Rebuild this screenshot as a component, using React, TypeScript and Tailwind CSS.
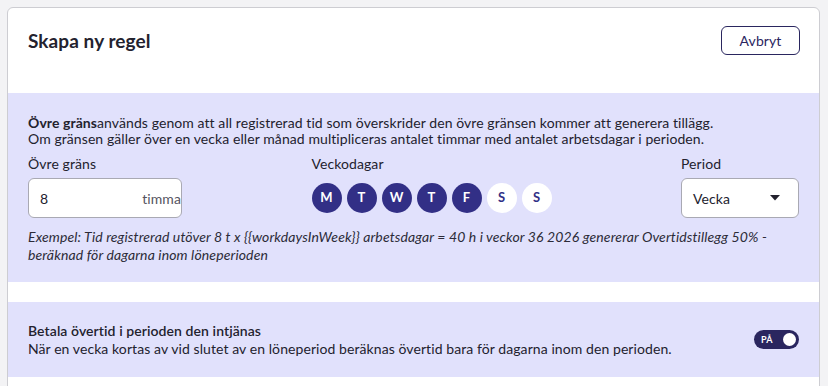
import React, { useState } from "react";

const days = [
  { label: "M", on: true },
  { label: "T", on: true },
  { label: "W", on: true },
  { label: "T", on: true },
  { label: "F", on: true },
  { label: "S", on: false },
  { label: "S", on: false },
];

const DayButton: React.FC<{ label: string; on: boolean }> = ({ label, on }) => (
  <button
    className={`w-[30px] h-[30px] rounded-full flex items-center justify-center text-[13px] font-bold ${
      on ? "bg-[#322f86] text-white" : "bg-white text-[#322f86]"
    }`}
  >
    {label}
  </button>
);

const Toggle: React.FC<{ checked: boolean; onChange: () => void }> = ({ checked, onChange }) => (
  <button
    onClick={onChange}
    className="w-[45px] h-[19px] rounded-full bg-[#2a265f] flex items-center justify-between pl-[7px] pr-[3px]"
  >
    <span className="text-[9px] font-bold text-white leading-none">{checked ? "PÅ" : "AV"}</span>
    <span className="w-[13px] h-[13px] rounded-full bg-white" />
  </button>
);

const example =
  "Exempel: Tid registrerad utöver 8 t x {{workdaysInWeek}} arbetsdagar = 40 h i veckor 36 2026 genererar Overtidstillegg 50%\u00a0- beräknad för dagarna inom löneperioden";

export default function App() {
  const [payInPeriod, setPayInPeriod] = useState(true);

  return (
    <div className="min-h-screen bg-[#f3f3f5] pt-[7px] pl-[7px] pr-[8px] font-['Lato',sans-serif] text-[#23222e] tracking-[0.08px]">
      <div className="bg-white border border-[#cdcdd2] rounded-t-md min-h-[380px]">
        {/* header */}
        <div className="flex justify-between items-start h-[85px] pl-[20px] pr-[19px] pt-[18px]">
          <h1 className="text-[19px] leading-[24px] font-bold text-[#23222e] mt-[3px]">Skapa ny regel</h1>
          <button className="w-[79px] h-[29px] border border-[#2a265f] rounded-md text-[14px] text-[#2a265f]">
            Avbryt
          </button>
        </div>

        {/* upper limit */}
        <div className="bg-[#e1e1fc] px-[20px] pt-[22px] h-[189px]">
          <p className="text-[14px] leading-[16px]">
            <span className="font-bold">Övre gräns</span>används genom att all registrerad tid som överskrider den
            övre gränsen kommer att generera tillägg.
            <br />
            Om gränsen gäller över en vecka eller månad multipliceras antalet timmar med antalet arbetsdagar i
            perioden.
          </p>

          <div className="flex justify-between items-end mt-[8px]">
            <div className="flex flex-col gap-[6px]">
              <label className="text-[14px] leading-[17px]">Övre gräns</label>
              <div className="w-[154px] h-[40px] bg-white border border-[#a9a9b3] rounded-md flex items-center justify-between pl-[11px] overflow-hidden">
                <span className="text-[14px]">8</span>
                <span className="text-[14px] text-[#55545f]">timma</span>
              </div>
            </div>

            <div className="flex flex-col gap-[6px]">
              <label className="text-[14px] leading-[17px]">Veckodagar</label>
              <div className="flex gap-[5px] h-[40px] items-center">
                {days.map((d, i) => (
                  <DayButton key={i} label={d.label} on={d.on} />
                ))}
              </div>
            </div>

            <div className="flex flex-col gap-[6px]">
              <label className="text-[14px] leading-[17px]">Period</label>
              <div className="w-[118px] h-[40px] bg-white border border-[#a9a9b3] rounded-md flex items-center justify-between pl-[11px] pr-[18px]">
                <span className="text-[14px]">Vecka</span>
                <svg width="10" height="6" viewBox="0 0 10 6">
                  <path d="M0 0 L10 0 L5 5.5 Z" fill="#23222e" />
                </svg>
              </div>
            </div>
          </div>

          <p className="text-[14px] leading-[18px] italic tracking-[0.12px] mt-[10px] text-[#2c2b38]">{example}</p>
        </div>

        <div className="h-[20px]" />

        {/* pay in period */}
        <div className="bg-[#e1e1fc] px-[20px] h-[75px] flex items-center justify-between">
          <div>
            <p className="text-[14px] leading-[18px] font-semibold">Betala övertid i perioden den intjänas</p>
            <p className="text-[14px] leading-[18px]">
              När en vecka kortas av vid slutet av en löneperiod beräknas övertid bara för dagarna inom den perioden.
            </p>
          </div>
          <Toggle checked={payInPeriod} onChange={() => setPayInPeriod(!payInPeriod)} />
        </div>
      </div>
    </div>
  );
}
